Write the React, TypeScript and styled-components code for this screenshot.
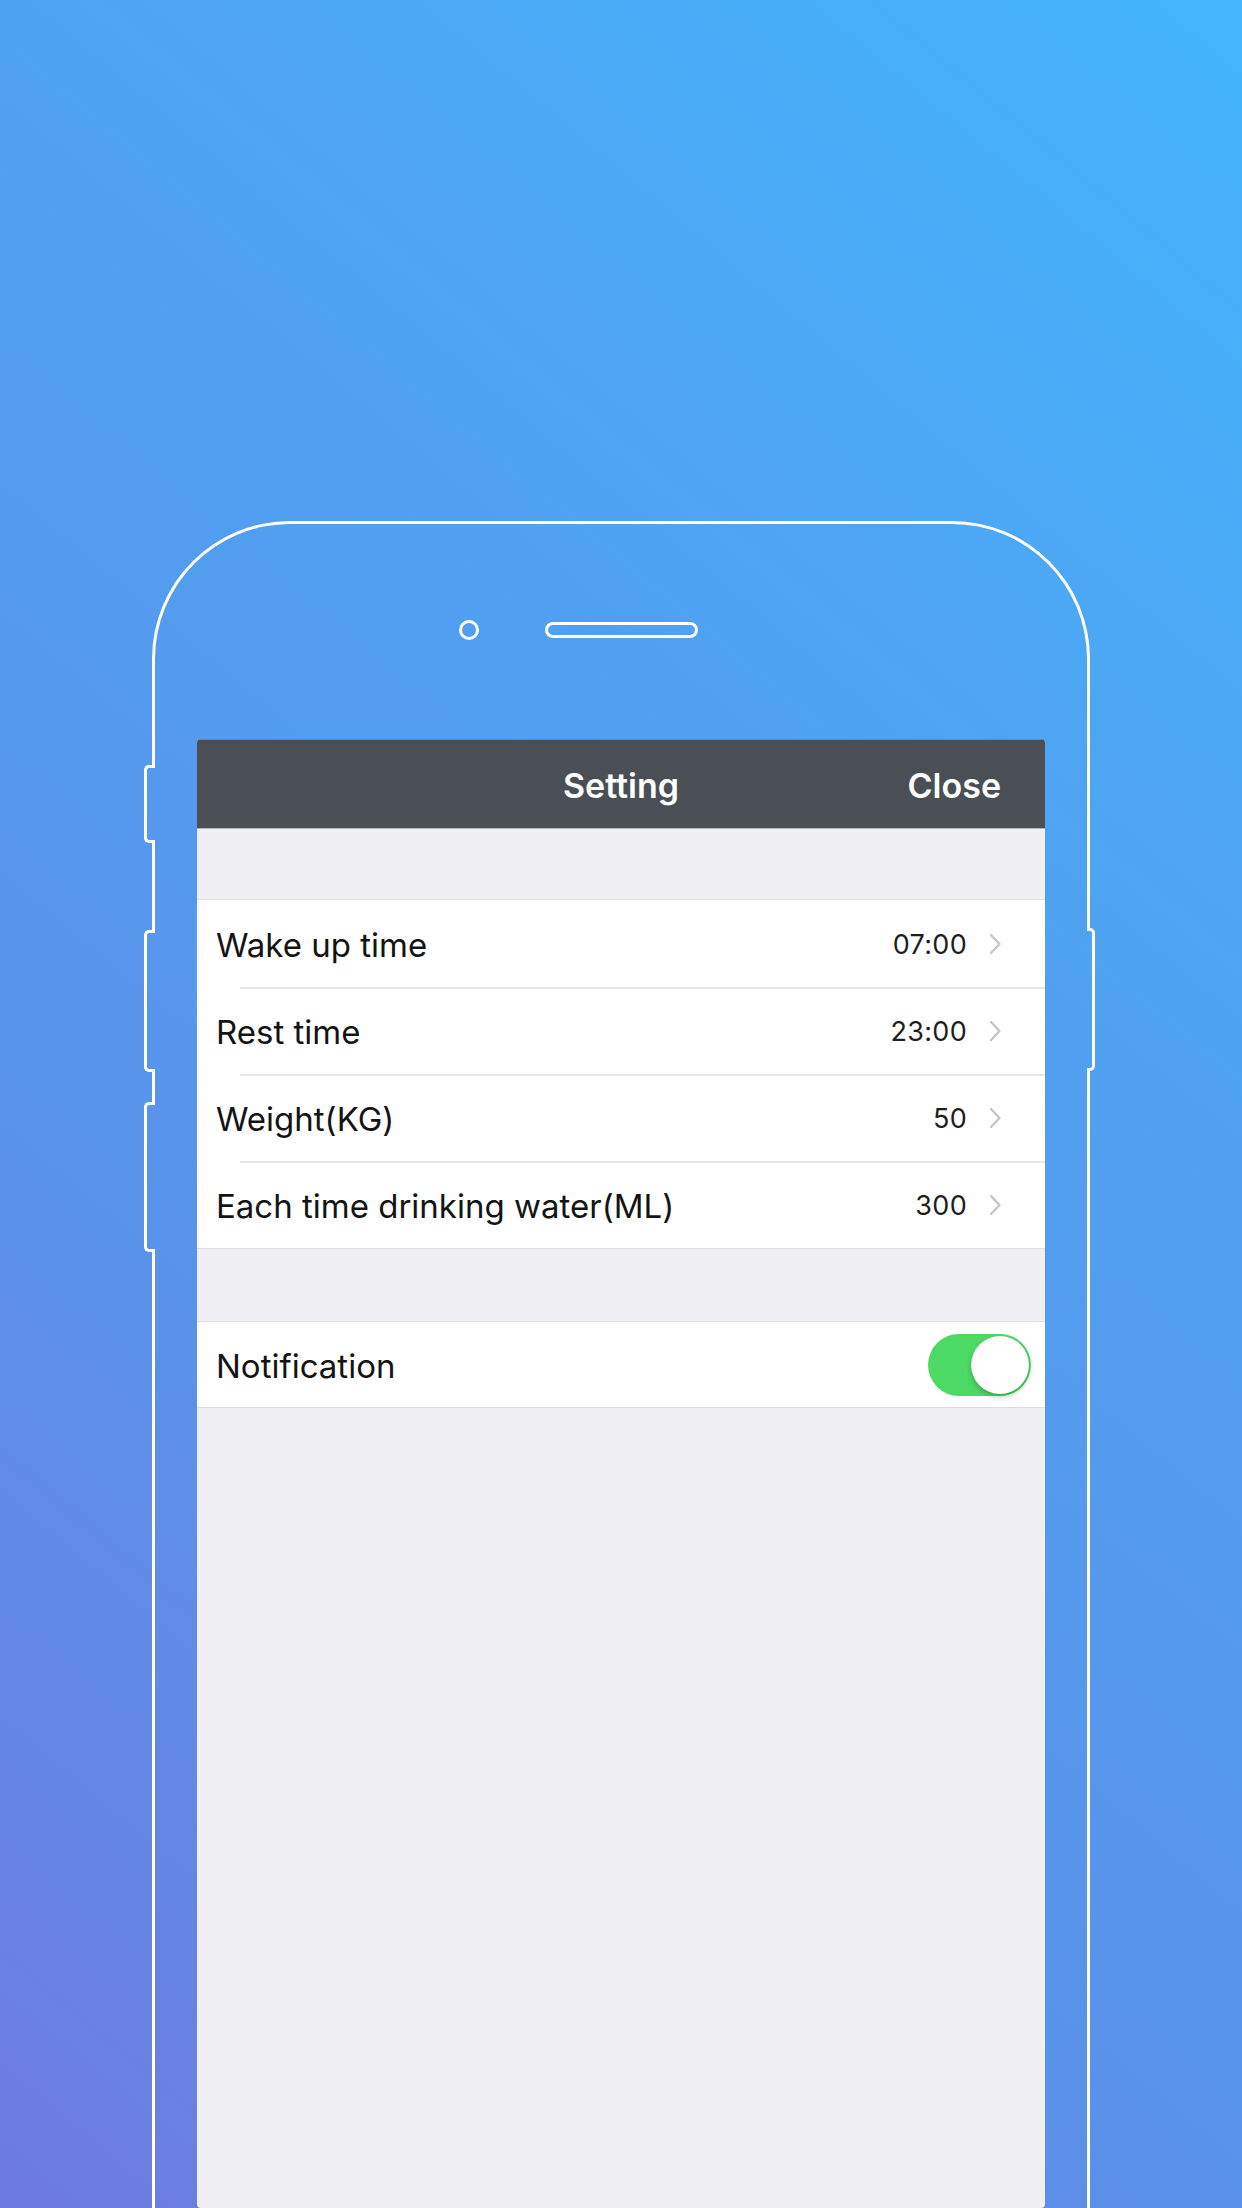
import React from "react";
import styled, { createGlobalStyle } from "styled-components";

const BG =
  "linear-gradient(40deg, #6e7ae0 0%, #5a92ea 32%, #4fa2f2 68%, #44b5fd 100%)";

const Global = createGlobalStyle`
  html, body { margin: 0; padding: 0; }
  body { font-family: Inter, "Noto Sans", "Liberation Sans", sans-serif; }
  #root { width: 1242px; height: 2208px; }
`;

const Page = styled.div`
  width: 1242px;
  height: 2208px;
  overflow: hidden;
  box-sizing: border-box;
  padding-top: 521px;
  display: flex;
  justify-content: center;
  background: ${BG};
  background-attachment: fixed;
`;

const Phone = styled.div`
  position: relative;
  width: 938px;
  box-sizing: border-box;
  border: 3px solid #ffffff;
  border-bottom: none;
  border-radius: 138px 138px 0 0;
  padding: 96px 42px 0;
  display: flex;
  flex-direction: column;
`;

const SideButton = styled.div<{ $side: "left" | "right"; $top: number; $h: number }>`
  position: absolute;
  top: ${(p) => p.$top}px;
  height: ${(p) => p.$h}px;
  box-sizing: border-box;
  background: ${BG};
  background-attachment: fixed;
  ${(p) =>
    p.$side === "left"
      ? `left: -11px; width: 11px; border: 3px solid #fff; border-right: none; border-radius: 5px 0 0 5px;`
      : `right: -8px; width: 8px; border: 3px solid #fff; border-left: none; border-radius: 0 5px 5px 0;`}
`;

const SensorRow = styled.div`
  display: grid;
  grid-template-columns: 1fr auto 1fr;
  align-items: center;
  height: 16px;
`;

const Camera = styled.div`
  justify-self: end;
  margin-right: 66px;
  width: 20px;
  height: 20px;
  box-sizing: border-box;
  border: 3px solid #fff;
  border-radius: 50%;
`;

const Speaker = styled.div`
  width: 153px;
  height: 16px;
  box-sizing: border-box;
  border: 3px solid #fff;
  border-radius: 8px;
`;

const Screen = styled.div`
  margin-top: 103px;
  flex: 1;
  background: #efeff4;
  border-radius: 4px;
  overflow: hidden;
  display: flex;
  flex-direction: column;
`;

const Header = styled.div`
  flex: none;
  height: 90px;
  box-sizing: border-box;
  background: #4a4f56;
  border-top: 1px solid #7f848a;
  border-bottom: 1px solid #b4b5b9;
  display: grid;
  grid-template-columns: 1fr auto 1fr;
  align-items: center;
  padding: 2px 44px 0;
  color: #ffffff;
  font-size: 34px;
  font-weight: 600;
`;

const Title = styled.div`
  grid-column: 2;
`;

const CloseBtn = styled.div`
  grid-column: 3;
  justify-self: end;
`;

const Gap = styled.div<{ $h: number }>`
  flex: none;
  height: ${(p) => p.$h}px;
`;

const Group = styled.div`
  flex: none;
  background: #ffffff;
  border-top: 1px solid #dedee3;
  border-bottom: 1px solid #dedee3;
`;

const Row = styled.div<{ $h: number }>`
  position: relative;
  box-sizing: border-box;
  height: ${(p) => p.$h}px;
  display: flex;
  align-items: center;
  padding-left: 19px;
  & + &::before {
    content: "";
    position: absolute;
    top: 0;
    left: 43px;
    right: 0;
    height: 2px;
    background: #e6e6eb;
  }
`;

const Label = styled.span`
  flex: 1;
  font-size: 33px;
  color: #141414;
  padding-top: 2px;
`;

const Value = styled.span`
  font-size: 27px;
  color: #1e1e1e;
  letter-spacing: 0.3px;
  padding-top: 2px;
`;

const Chevron = styled.svg`
  width: 14px;
  height: 24px;
  margin-left: 21px;
  margin-right: 43px;
`;

const Track = styled.div`
  width: 103px;
  height: 62px;
  margin-right: 14px;
  box-sizing: border-box;
  border-radius: 31px;
  background: #4cd964;
  display: flex;
  align-items: center;
  justify-content: flex-end;
  padding: 2px;
`;

const Knob = styled.div`
  width: 58px;
  height: 58px;
  border-radius: 50%;
  background: #ffffff;
  box-shadow: 0 3px 5px rgba(0, 0, 0, 0.22), 0 0 1px rgba(0, 0, 0, 0.15);
`;

const rows = [
  { label: "Wake up time", value: "07:00" },
  { label: "Rest time", value: "23:00" },
  { label: "Weight(KG)", value: "50" },
  { label: "Each time drinking water(ML)", value: "300" },
];

const ChevronIcon = () => (
  <Chevron viewBox="0 0 14 24">
    <path d="M3 3 L11.5 12 L3 21" fill="none" stroke="#c4c4c9" strokeWidth="2.3" strokeLinecap="round" strokeLinejoin="round" />
  </Chevron>
);

export default function App() {
  return (
    <>
      <Global />
      <Page>
        <Phone>
          <SideButton $side="left" $top={241} $h={78} />
          <SideButton $side="left" $top={406} $h={142} />
          <SideButton $side="left" $top={578} $h={150} />
          <SideButton $side="right" $top={404} $h={143} />
          <SensorRow>
            <Camera />
            <Speaker />
            <div />
          </SensorRow>
          <Screen>
            <Header>
              <Title>Setting</Title>
              <CloseBtn>Close</CloseBtn>
            </Header>
            <Gap $h={70} />
            <Group>
              {rows.map((r) => (
                <Row key={r.label} $h={87}>
                  <Label>{r.label}</Label>
                  <Value>{r.value}</Value>
                  <ChevronIcon />
                </Row>
              ))}
            </Group>
            <Gap $h={72} />
            <Group>
              <Row $h={85}>
                <Label>Notification</Label>
                <Track>
                  <Knob />
                </Track>
              </Row>
            </Group>
          </Screen>
        </Phone>
      </Page>
    </>
  );
}
